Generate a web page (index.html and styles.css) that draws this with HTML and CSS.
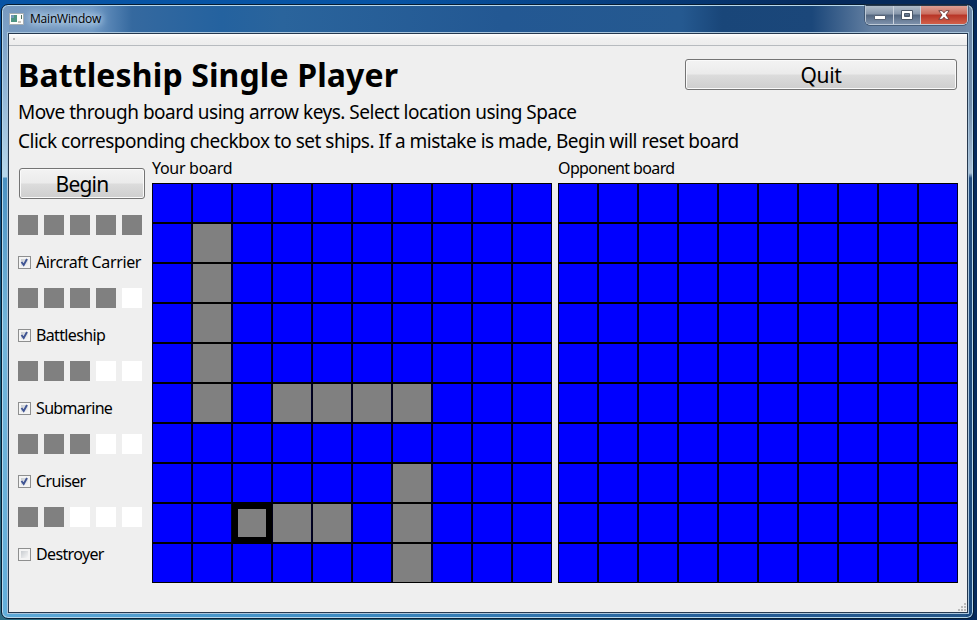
FILE: index.html
```html
<!DOCTYPE html>
<html lang="en">
<head>
<meta charset="utf-8">
<title>MainWindow</title>
<link rel="stylesheet" href="styles.css">
</head>
<body>
<div class="window">
  <header class="titlebar">
    <svg class="app-icon" width="15" height="12" viewBox="0 0 15 12"><path fill="#fcfcfa" stroke="#a5adb2" d="M.5.5h14v11H.5z"/><path fill="#4d9482" d="M2 2h6v7H2z"/><path fill="#7297b8" d="M2 2h3v3H2z"/><path fill="#50745f" d="M12 2h1v4h-1z"/><path fill="#c8c2ba" d="M9 8h3v2H9z"/></svg>
    <span class="window-title">MainWindow</span>
    <div class="controls">
      <span class="control min"><svg width="12" height="6"><path fill="#fff" stroke="#566274" d="M.5 1.5h11v4H.5z"/></svg></span>
      <span class="control max"><svg width="12" height="10"><path fill="#fff" fill-rule="evenodd" stroke="#4c5869" d="M.5.5h11v9H.5zM3.5 3.5h5v3h-5z"/></svg></span>
      <span class="control close"><svg width="12" height="10"><path fill="#fff" stroke="#693b3b" stroke-width=".9" d="M.8.7h3.4L6 2.8 7.8.7h3.4L8 5l3.2 4.3H7.8L6 7.2 4.2 9.3H.8L4 5z"/></svg></span>
    </div>
  </header>
  <div class="client">
    <div class="menu-strip"></div>
    <main class="content">
      <div class="heading">
        <h1>Battleship Single Player</h1>
        <button class="button quit">Quit</button>
      </div>
      <p class="hint move">Move through board using arrow keys. Select location using Space</p>
      <p class="hint set">Click corresponding checkbox to set ships. If a mistake is made, Begin will reset board</p>
      <div class="game">
        <aside class="fleet">
          <button class="button begin">Begin</button>
          <div class="ships" id="ships"></div>
        </aside>
        <section class="side"><h2 class="own">Your board</h2><div class="board" id="own"></div></section>
        <section class="side"><h2 class="opp">Opponent board</h2><div class="board" id="opponent"></div></section>
      </div>
    </main>
    <svg class="grip" width="9" height="9"><path fill="#bababa" d="M6 0h2v2H6zM3 3h2v2H3zM6 3h2v2H6zM0 6h2v2H0zM3 6h2v2H3zM6 6h2v2H6z"/></svg>
  </div>
</div>
<script src="game.js"></script>
</body>
</html>
```
FILE: styles.css
```css
* { box-sizing: border-box; }
body {
  margin: 0;
  width: 977px;
  height: 620px;
  padding: 4px 4px 1px 1px;
  overflow: hidden;
  background: linear-gradient(90deg, transparent 40%, #062a5c 85%), linear-gradient(#0754a5 0, #0b4c88 28%, #135e80 60%, #2d6c83);
  font-family: "Noto Sans", sans-serif;
  color: #000;
}
.window {
  width: 973px;
  height: 615px;
  display: flex;
  flex-direction: column;
  padding: 0 5px 4px;
  border: 1px solid #071d32;
  border-radius: 7px;
  background:
    linear-gradient(transparent 0, #7fa5cb 40px, #b6d7ec 172px, #4a91c3 173px, #72b5da 320px, #62aeda) left / 7px 100% no-repeat,
    linear-gradient(#6f89a9 0, #728eab 100px, #aac0d5 168px, #234d80 173px, #1c4c80) right / 7px 100% no-repeat,
    linear-gradient(90deg, #5eabd9, #3d8dc4 35%, #245d98 75%, #245587) bottom / 100% 8px no-repeat,
    linear-gradient(90deg, #7899be 0, #6f98c4 90px, #35699f 130px, #24629f 220px, #2a649c 280px, #235893 500px, #255990 680px, #194679 720px, #1b477a 810px, #6480a2 870px, #7088a7);
  box-shadow: inset 0 0 0 1px #b8d8ec;
}
.titlebar { height: 27px; flex: none; display: flex; align-items: flex-start; padding-left: 2px; }
.app-icon { margin-top: 8px; }
.window-title { margin: 6px 0 0 6px; font: 12px/16px "Open Sans", sans-serif; letter-spacing: -.2px; text-shadow: 0 0 6px #d9e9f6, 0 0 9px #c4dcef, 0 0 12px #c4dcef; }
.controls { display: flex; margin: 0 0 0 auto; height: 20px; border: 1px solid #bdc9d6; border-top-color: #283b50; border-radius: 0 0 5px 5px; overflow: hidden; box-shadow: 0 0 0 .5px #25384e; }
.control { display: flex; align-items: center; justify-content: center; background: linear-gradient(#b0bdcb, #8696aa 45%, #53667f 50%, #7d91ab); border-right: 1px solid #cbd3dd; }
.min { width: 28px; padding-top: 3px; }
.max { width: 27px; }
.close { width: 46px; border: 0; background: linear-gradient(#dc9f94, #cb6d5e 45%, #b73426 50%, #d1604a); }
.client {
  position: relative;
  flex: 1;
  width: 962px;
  border: 1px solid #a9c5dc;
  background: #efefef;
  box-shadow: inset 0 0 0 1px #26394f;
  padding: 1px;
}
.menu-strip { height: 12px; border-bottom: 1px solid #b7bbbf; background: linear-gradient(#b9b9b9, #b9b9b9) 4px 4px / 2px 2px no-repeat, linear-gradient(#fff, #f1f1f1 40%, #ededed); }
.content { padding: 13px 9px 0 9px; }
.heading { display: flex; justify-content: space-between; align-items: flex-start; height: 39px; }
h1 { margin: -2px 0 0; font: bold 32px/36px "Noto Sans", sans-serif; letter-spacing: .12px; white-space: nowrap; }
.button { padding: 0; border: 1px solid #747474; border-radius: 3px; background: linear-gradient(#f3f3f3, #ebebeb 48%, #dcdcdc 52%, #cecece); box-shadow: inset 0 0 0 1px #fafafa; font: 21px/28px "Noto Sans", sans-serif; letter-spacing: -.4px; color: #000; height: 31px; }
.quit { width: 272px; margin: 0 1px 0 0; }
.hint { margin: 0; font-size: 19px; line-height: 29px; height: 29px; letter-spacing: -.495px; white-space: nowrap; }
.game { display: flex; margin-top: 1px; gap: 6px; }
.fleet { width: 128px; flex: none; }
.begin { width: 126px; margin: 11px 0 0 1px; display: block; letter-spacing: -.8px; }
.ships { display: flex; flex-direction: column; margin-top: 16px; }
.ship { height: 73px; }
.pips { display: flex; gap: 6px; }
.pip { width: 20px; height: 20px; background: #fff; }
.pip.on { background: #808080; }
.option { display: flex; align-items: center; gap: 5px; margin-top: 16px; height: 22px; font-size: 16px; line-height: 22px; letter-spacing: -.65px; white-space: nowrap; }
.ship:first-child .option { letter-spacing: -.38px; }
.box { width: 13px; height: 13px; flex: none; border: 1px solid #8e8f8f; background: linear-gradient(135deg, #c8ccd0, #f6f6f6) 2px 2px / 7px 7px no-repeat, #f4f4f4; }
.box svg { display: block; }
.side { width: 400px; flex: none; }
h2 { margin: 0; font: 16px/22px "Noto Sans", sans-serif; height: 26px; letter-spacing: -.3px; white-space: nowrap; }
h2.opp { letter-spacing: -.62px; }
.board { width: 400px; height: 400px; display: grid; grid-template-columns: repeat(10, 40px); grid-auto-rows: 40px; }
.cell { background: #00f; border: 1px solid #000; border-left-color: #000018; border-right-color: #000028; }
.cell.hull { background: #808080; }
.cell.cursor { border: 6px solid #000; }
.grip { position: absolute; right: 1px; bottom: 1px; }
```
FILE: game.js
```js
const fleet = [["Aircraft Carrier", 5, true], ["Battleship", 4, true], ["Submarine", 3, true], ["Cruiser", 3, true], ["Destroyer", 2, false]];
const tick = '<svg width="11" height="11"><path d="M2.5 5l2.2 3L8 2" fill="none" stroke="#405594" stroke-width="1.9"/></svg>';
document.getElementById("ships").innerHTML = fleet.map(([name, size, placed]) =>
  `<div class="ship"><div class="pips">${[0, 1, 2, 3, 4].map(i => `<span class="pip${i < size ? " on" : ""}"></span>`).join("")}</div>` +
  `<label class="option"><span class="box">${placed ? tick : ""}</span><span class="name">${name}</span></label></div>`).join("");
const hulls = new Set([11, 21, 31, 41, 51, 53, 54, 55, 56, 76, 86, 96, 82, 83, 84]);
function draw(id, occupied, cursor) {
  document.getElementById(id).innerHTML = Array.from({ length: 100 }, (_, i) =>
    `<div class="cell${occupied.has(i) ? " hull" : ""}${i === cursor ? " cursor" : ""}"></div>`).join("");
}
draw("own", hulls, 82);
draw("opponent", new Set(), -1);
```
